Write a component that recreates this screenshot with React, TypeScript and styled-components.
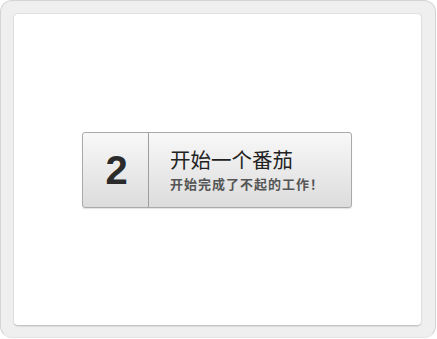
import styled, { createGlobalStyle } from "styled-components";

export default function App() {
    return (
        <>
            <GlobalStyle />
            <Frame>
                <Card>
                    <StartButton type="button">
                        <Count>2</Count>
                        <Label>
                            <Title>开始一个番茄</Title>
                            <Subtitle>开始完成了不起的工作！</Subtitle>
                        </Label>
                    </StartButton>
                </Card>
            </Frame>
        </>
    );
}

const GlobalStyle = createGlobalStyle`
body {
    margin: 0;
    background: #fff;
    font-family: "Liberation Sans", "Noto Sans CJK SC", sans-serif;
}
`

const Frame = styled.div`
box-sizing: border-box;
width: 436px;
height: 338px;
padding: 12px 13px 11px 12px;
background: #efefef;
border: 1px solid #d4d4d4;
border-bottom-color: #e4e4e4;
border-radius: 12px;
`

const Card = styled.div`
box-sizing: border-box;
height: 100%;
display: flex;
align-items: center;
justify-content: center;
background: #fff;
border: 1px solid #dedede;
border-bottom-color: #c4c4c4;
border-radius: 5px;
box-shadow: 0 1px 1px rgba(0, 0, 0, 0.08);
`

const StartButton = styled.button`
box-sizing: border-box;
width: 270px;
height: 76px;
margin-left: -1px;
padding: 0;
display: flex;
align-items: stretch;
background: linear-gradient(to bottom, #f8f8f8, #dcdcdc);
border: 1px solid #a9a9a9;
border-radius: 3px;
box-shadow: 0 1px 1px rgba(0, 0, 0, 0.12);
font-family: inherit;
cursor: pointer;
`

const Count = styled.div`
box-sizing: border-box;
width: 66px;
display: flex;
align-items: center;
justify-content: center;
border-right: 1px solid #9e9e9e;
font-size: 40px;
font-weight: bold;
color: #2b2b2b;
padding-top: 1px;
padding-left: 2px;
`

const Label = styled.div`
flex: 1;
display: flex;
flex-direction: column;
justify-content: center;
padding-left: 21px;
padding-top: 2px;
text-align: left;
`

const Title = styled.div`
font-size: 20.5px;
color: #222;
line-height: 24px;
`

const Subtitle = styled.div`
font-family: "Noto Sans CJK SC", sans-serif;
font-size: 13px;
font-weight: bold;
letter-spacing: 1px;
color: #555;
line-height: 18px;
margin-top: 2px;
`
